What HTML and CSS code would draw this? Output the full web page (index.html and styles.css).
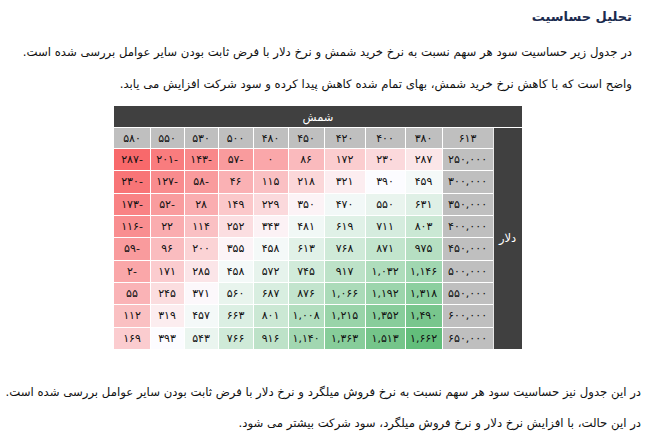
FILE: index.html
```html
<!DOCTYPE html>
<html lang="fa" dir="rtl">
<head>
<meta charset="utf-8">
<title>تحلیل حساسیت</title>
<link rel="stylesheet" href="styles.css">
</head>
<body>
<div class="page">
  <h1 class="title">تحلیل حساسیت</h1>
  <p class="para p1">در جدول زیر حساسیت سود هر سهم نسبت به نرخ خرید شمش و نرخ دلار با فرض ثابت بودن سایر عوامل بررسی شده است.</p>
  <p class="para p2">واضح است که با کاهش نرخ خرید شمش، بهای تمام شده کاهش پیدا کرده و سود شرکت افزایش می یابد.</p>

  <table class="sens">
    <colgroup>
      <col class="c-dark"><col class="c-lab"><col class="c37"><col class="c40"><col class="c41"><col class="c36"><col class="c35"><col class="c35"><col class="c34"><col class="c34"><col class="c36">
    </colgroup>
    <tr class="r-top"><th class="dark" colspan="11">شمش</th></tr>
    <tr class="r-head">
      <th class="dark side" rowspan="10">دلار</th>
      <th class="gray">۶۱۳</th><th class="gray">۳۸۰</th><th class="gray">۴۰۰</th><th class="gray">۴۲۰</th><th class="gray">۴۵۰</th><th class="gray">۴۸۰</th><th class="gray">۵۰۰</th><th class="gray">۵۳۰</th><th class="gray">۵۵۰</th><th class="gray">۵۸۰</th>
    </tr>
    <tr><th class="gray">۲۵۰,۰۰۰</th><td data-v="287">۲۸۷</td><td data-v="230">۲۳۰</td><td data-v="172">۱۷۲</td><td data-v="86">۸۶</td><td data-v="0">۰</td><td data-v="-57">-۵۷</td><td data-v="-143">-۱۴۳</td><td data-v="-201">-۲۰۱</td><td data-v="-287">-۲۸۷</td></tr>
    <tr><th class="gray">۳۰۰,۰۰۰</th><td data-v="459">۴۵۹</td><td data-v="390">۳۹۰</td><td data-v="321">۳۲۱</td><td data-v="218">۲۱۸</td><td data-v="115">۱۱۵</td><td data-v="46">۴۶</td><td data-v="-58">-۵۸</td><td data-v="-127">-۱۲۷</td><td data-v="-230">-۲۳۰</td></tr>
    <tr><th class="gray">۳۵۰,۰۰۰</th><td data-v="631">۶۳۱</td><td data-v="550">۵۵۰</td><td data-v="470">۴۷۰</td><td data-v="350">۳۵۰</td><td data-v="229">۲۲۹</td><td data-v="149">۱۴۹</td><td data-v="28">۲۸</td><td data-v="-52">-۵۲</td><td data-v="-173">-۱۷۳</td></tr>
    <tr><th class="gray">۴۰۰,۰۰۰</th><td data-v="803">۸۰۳</td><td data-v="711">۷۱۱</td><td data-v="619">۶۱۹</td><td data-v="481">۴۸۱</td><td data-v="343">۳۴۳</td><td data-v="252">۲۵۲</td><td data-v="114">۱۱۴</td><td data-v="22">۲۲</td><td data-v="-116">-۱۱۶</td></tr>
    <tr><th class="gray">۴۵۰,۰۰۰</th><td data-v="975">۹۷۵</td><td data-v="871">۸۷۱</td><td data-v="768">۷۶۸</td><td data-v="613">۶۱۳</td><td data-v="458">۴۵۸</td><td data-v="355">۳۵۵</td><td data-v="200">۲۰۰</td><td data-v="96">۹۶</td><td data-v="-59">-۵۹</td></tr>
    <tr><th class="gray">۵۰۰,۰۰۰</th><td data-v="1146">۱,۱۴۶</td><td data-v="1032">۱,۰۳۲</td><td data-v="917">۹۱۷</td><td data-v="745">۷۴۵</td><td data-v="572">۵۷۲</td><td data-v="458">۴۵۸</td><td data-v="285">۲۸۵</td><td data-v="171">۱۷۱</td><td data-v="-2">-۲</td></tr>
    <tr><th class="gray">۵۵۰,۰۰۰</th><td data-v="1318">۱,۳۱۸</td><td data-v="1192">۱,۱۹۲</td><td data-v="1066">۱,۰۶۶</td><td data-v="876">۸۷۶</td><td data-v="687">۶۸۷</td><td data-v="560">۵۶۰</td><td data-v="371">۳۷۱</td><td data-v="245">۲۴۵</td><td data-v="55">۵۵</td></tr>
    <tr><th class="gray">۶۰۰,۰۰۰</th><td data-v="1490">۱,۴۹۰</td><td data-v="1352">۱,۳۵۲</td><td data-v="1215">۱,۲۱۵</td><td data-v="1008">۱,۰۰۸</td><td data-v="801">۸۰۱</td><td data-v="663">۶۶۳</td><td data-v="457">۴۵۷</td><td data-v="319">۳۱۹</td><td data-v="112">۱۱۲</td></tr>
    <tr><th class="gray">۶۵۰,۰۰۰</th><td data-v="1662">۱,۶۶۲</td><td data-v="1513">۱,۵۱۳</td><td data-v="1363">۱,۳۶۳</td><td data-v="1140">۱,۱۴۰</td><td data-v="916">۹۱۶</td><td data-v="766">۷۶۶</td><td data-v="543">۵۴۳</td><td data-v="393">۳۹۳</td><td data-v="169">۱۶۹</td></tr>
  </table>

  <p class="para p3">در این جدول نیز حساسیت سود هر سهم نسبت به نرخ فروش میلگرد و نرخ دلار با فرض ثابت بودن سایر عوامل بررسی شده است.</p>
  <p class="para p4">در این حالت، با افزایش نرخ دلار و نرخ فروش میلگرد، سود شرکت بیشتر می شود.</p>
</div>
<script src="script.js"></script>
</body>
</html>
```
FILE: styles.css
```css
html, body {
  margin: 0;
  padding: 0;
  background: #ffffff;
}
body {
  font-family: "DejaVu Sans", sans-serif;
  color: #111111;
}
.page {
  direction: rtl;
  padding: 0 31px 0 4px;
  width: 663px;
  box-sizing: border-box;
}
.title {
  margin: 7px 0 0 0;
  font-size: 13px;
  line-height: 20px;
  font-weight: bold;
  color: #1c2b4f;
}
.para {
  margin: 0;
  font-size: 11.7px;
  line-height: 20px;
  white-space: nowrap;
}
.p1 { margin-top: 15px; }
.p2 { margin-top: 12px; }
.p3 { margin-top: 32px; margin-right: -9px; }
.p4 { margin-top: 11px; margin-right: -9px; }

.sens {
  margin: 11px auto 0 auto;
  width: 408px;
  table-layout: fixed;
  border-collapse: collapse;
  font-size: 11px;
  color: #111111;
}
.c-dark { width: 29px; }
.c-lab { width: 51px; }
.c34 { width: 34px; }
.c35 { width: 35px; }
.c36 { width: 36px; }
.c37 { width: 37px; }
.c40 { width: 40px; }
.c41 { width: 41px; }

.sens th, .sens td {
  border: 1px solid #ffffff;
  padding: 0;
  text-align: center;
  vertical-align: middle;
  font-weight: normal;
  white-space: nowrap;
}
.sens tr { height: 22.33px; }
.sens .r-top { height: 22px; }
.sens .r-head { height: 21px; }
.sens .dark {
  background: #404040;
  color: #ffffff;
  font-size: 11.5px;
}
.sens .side {
  border-left-color: #e8e8e8;
}
.sens .gray {
  background: #bfbfbf;
  color: #111111;
}
```
FILE: script.js
```js
(function () {
  var min = -287, mid = 390, max = 1662;
  var red = [248, 105, 107], white = [252, 252, 255], green = [99, 190, 123];
  function mix(a, b, t) {
    return [0, 1, 2].map(function (i) { return Math.round(a[i] + (b[i] - a[i]) * t); });
  }
  var cells = document.querySelectorAll('td[data-v]');
  for (var i = 0; i < cells.length; i++) {
    var v = parseFloat(cells[i].getAttribute('data-v'));
    var c;
    if (v <= mid) {
      c = mix(red, white, (v - min) / (mid - min));
    } else {
      c = mix(white, green, (v - mid) / (max - mid));
    }
    cells[i].style.backgroundColor = 'rgb(' + c.join(',') + ')';
  }
})();
```
